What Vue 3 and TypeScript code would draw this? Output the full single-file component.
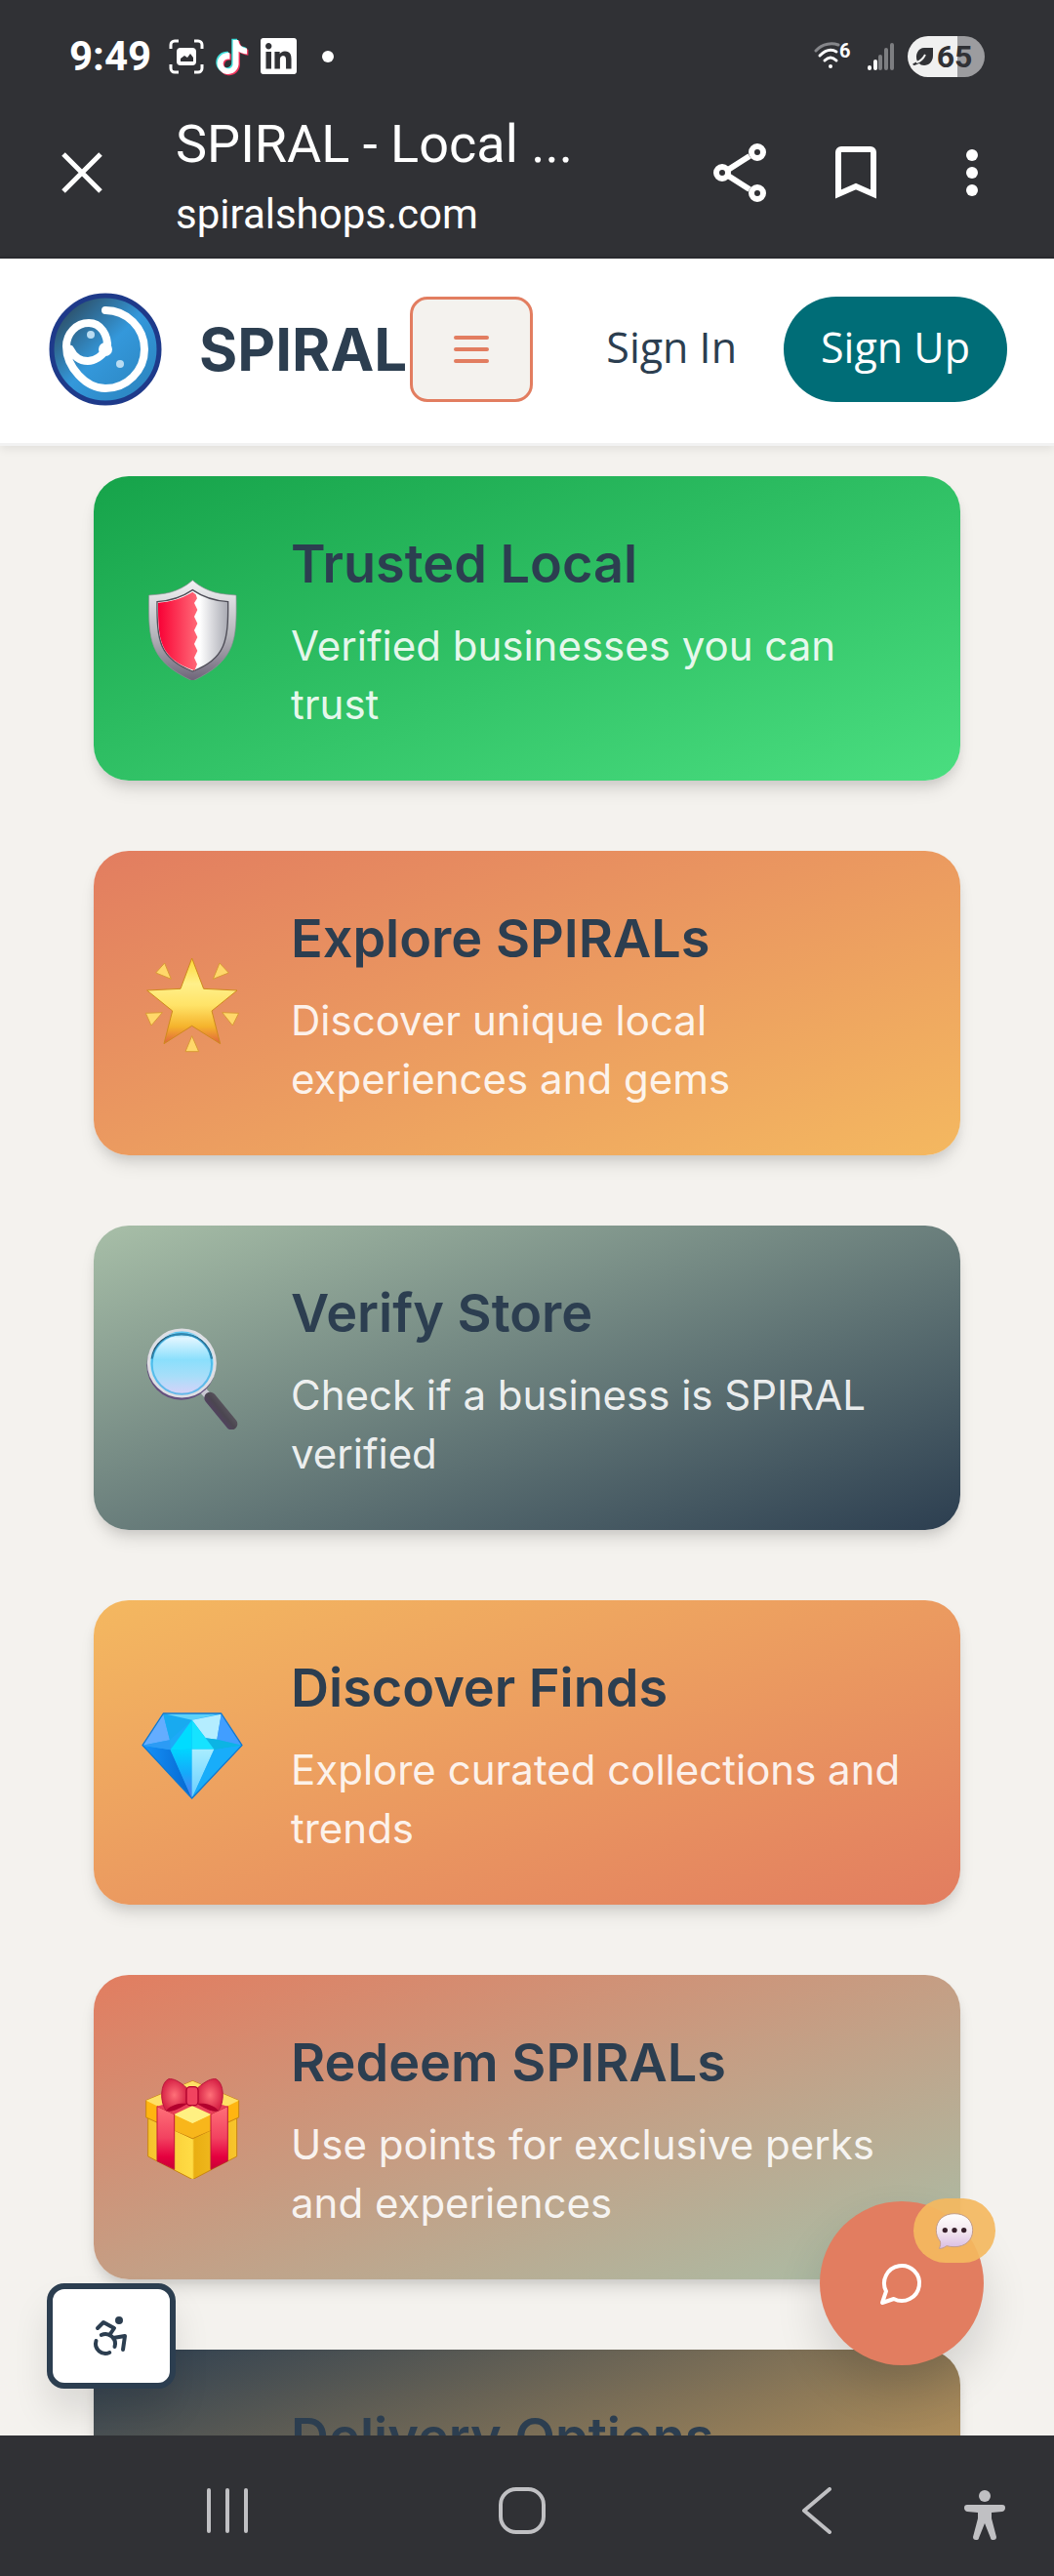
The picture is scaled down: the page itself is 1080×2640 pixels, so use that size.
<script setup lang="ts">
interface Feature {
  icon: 'shield' | 'star' | 'lens' | 'gem' | 'gift' | 'none'
  title: string
  text: string
  tone: string
}

const features: Feature[] = [
  { icon: 'shield', title: 'Trusted Local', text: 'Verified businesses you can trust', tone: 'green' },
  { icon: 'star', title: 'Explore SPIRALs', text: 'Discover unique local experiences and gems', tone: 'coral' },
  { icon: 'lens', title: 'Verify Store', text: 'Check if a business is SPIRAL verified', tone: 'sage' },
  { icon: 'gem', title: 'Discover Finds', text: 'Explore curated collections and trends', tone: 'gold' },
  { icon: 'gift', title: 'Redeem SPIRALs', text: 'Use points for exclusive perks and experiences', tone: 'blush' },
  { icon: 'none', title: 'Delivery Options', text: '', tone: 'navy' },
]

const tiktok =
  'M12.525.02c1.31-.02 2.61-.01 3.91-.02.08 1.53.63 3.09 1.75 4.17 1.12 1.11 2.7 1.62 4.24 1.79v4.03c-1.44-.05-2.89-.35-4.2-.97-.57-.26-1.1-.59-1.62-.93-.01 2.92.01 5.84-.02 8.75-.08 1.4-.54 2.79-1.35 3.94-1.31 1.92-3.58 3.17-5.91 3.21-1.43.08-2.86-.31-4.08-1.03-2.02-1.19-3.44-3.37-3.65-5.71-.02-.5-.03-1-.01-1.49.18-1.9 1.12-3.72 2.58-4.96 1.66-1.44 3.98-2.13 6.15-1.72.02 1.48-.04 2.96-.04 4.44-.99-.32-2.15-.23-3.02.37-.63.41-1.11 1.04-1.36 1.75-.21.51-.15 1.07-.14 1.61.24 1.64 1.82 3.02 3.5 2.87 1.12-.01 2.19-.66 2.77-1.61.19-.33.4-.67.41-1.06.1-1.79.06-3.57.07-5.36.01-4.03-.01-8.05.02-12.07z'
</script>

<template>
  <div class="screen">
    <div class="chrome">
      <div class="status">
        <span class="time">9:49</span>
        <svg class="capture" viewBox="0 0 36 36" width="36" height="36">
          <path d="M2 10V6a4 4 0 0 1 4-4h4M26 2h4a4 4 0 0 1 4 4v4M34 26v4a4 4 0 0 1-4 4h-4M10 34H6a4 4 0 0 1-4-4v-4" fill="none" stroke="#fff" stroke-width="3" />
          <rect x="8" y="9" width="20" height="18" rx="4" fill="#fff" />
          <path d="M12 23v-3l4-3 3 2 3-4 3 4v4z" fill="#303135" />
        </svg>
        <svg class="tiktok" viewBox="0 -1 26 27" width="38" height="40">
          <path :d="tiktok" fill="#3fdfdb" />
          <path :d="tiktok" fill="#f0355d" transform="translate(1.8 1.6)" />
          <path :d="tiktok" fill="#fff" transform="translate(.9 .8)" />
        </svg>
        <svg class="linkedin" viewBox="0 0 24 24" width="37" height="37">
          <path fill="#fff" d="M20.447 20.452h-3.554v-5.569c0-1.328-.027-3.037-1.852-3.037-1.853 0-2.136 1.445-2.136 2.939v5.667H9.351V9h3.414v1.561h.046c.477-.9 1.637-1.85 3.37-1.85 3.601 0 4.267 2.37 4.267 5.455v6.286zM5.337 7.433c-1.144 0-2.063-.926-2.063-2.065 0-1.138.92-2.063 2.063-2.063 1.14 0 2.064.925 2.064 2.063 0 1.139-.925 2.065-2.064 2.065zm1.782 13.019H3.555V9h3.564v11.452zM22.225 0H1.771C.792 0 0 .774 0 1.729v20.542C0 23.227.792 24 1.771 24h20.451C23.2 24 24 23.227 24 22.271V1.729C24 .774 23.2 0 22.222 0h.003z" />
        </svg>
        <span class="more-dot"></span>
        <div class="signals">
          <svg viewBox="0 -6 40 42" width="40" height="42">
            <g fill="none" stroke-linecap="round" stroke-width="3">
              <path d="M2 9C9 1 19 1 25 3" stroke="#85868a" />
              <path d="M6 14c6-6 12-7 17-4" stroke="#fff" />
              <path d="M11 19c4-4 8-4 12 0" stroke="#fff" />
            </g>
            <circle cx="17" cy="25" r="2" fill="#fff" />
            <text x="26" y="16" class="wifi-gen">6</text>
          </svg>
          <svg viewBox="0 0 28 30" width="28" height="30" fill="none" stroke-width="4" stroke-linecap="round">
            <path d="M3 26v1M9 20v7" stroke="#fff" />
            <path d="M14 15v12M20 8v19M26 3v24" stroke="#7d7e81" />
          </svg>
          <div class="battery">
            <svg viewBox="0 0 22 20" width="22" height="20">
              <path d="M21 1v8c0 6-4 10-9 10-3 0-4-1-5-2l-5 2c-2 0-2-2-1-2l4-2C2 8 6 1 12 1z" fill="#303135" />
              <path d="M4 16c4-1 7-4 9-8" fill="none" stroke="#f0f0f0" stroke-width="2" />
            </svg>
            <span>65</span>
          </div>
        </div>
      </div>
      <div class="toolbar">
        <button class="plain" aria-label="Close tab">
          <svg viewBox="0 0 44 44" width="44" height="44"><path d="M3 3l38 38M41 3L3 41" stroke="#fff" stroke-width="5" /></svg>
        </button>
        <div class="page-name">
          <div class="page-title">SPIRAL - Local ...</div>
          <div class="page-host">spiralshops.com</div>
        </div>
        <div class="tools">
          <button class="plain" aria-label="Share">
            <svg viewBox="0 0 56 62" width="56" height="62" fill="none" stroke="#fff" stroke-width="6">
              <path d="M16 28l22-14M16 34l22 14" />
              <circle cx="10" cy="31" r="6" /><circle cx="46" cy="10" r="6" /><circle cx="46" cy="52" r="6" />
            </svg>
          </button>
          <button class="plain" aria-label="Bookmark">
            <svg viewBox="0 0 42 54" width="42" height="54"><path d="M3 49V6a3 3 0 0 1 3-3h30a3 3 0 0 1 3 3v43l-18-8z" fill="none" stroke="#fff" stroke-width="6" /></svg>
          </button>
          <button class="plain" aria-label="More options">
            <svg viewBox="0 0 12 48" width="12" height="48" fill="#fff"><circle cx="6" cy="6" r="6" /><circle cx="6" cy="24" r="6" /><circle cx="6" cy="42" r="6" /></svg>
          </button>
        </div>
      </div>
    </div>

    <header class="site-header">
      <svg class="logo" viewBox="0 0 116 116" width="116" height="116">
        <defs>
          <linearGradient id="logoFill" x1="0" y1="0" x2="1" y2="1">
            <stop offset="0.1" stop-color="#2c4a60" /><stop offset="0.5" stop-color="#3498db" /><stop offset="1" stop-color="#2980b9" />
          </linearGradient>
        </defs>
        <circle cx="58" cy="58" r="55" fill="url(#logoFill)" stroke="#1e3a8a" stroke-width="5" />
        <path d="M58 18C80 18 98 36 98 58S80 98 58 98C38 98 18 76 18 55C18 42 28 31 41 31C53 31 61 43 60 57C55 64 48 70 40 70C31 70 25 64 22 58" fill="none" stroke="#fff" stroke-width="8" stroke-linecap="round" />
        <circle cx="58" cy="58" r="7" fill="#fff" />
        <circle cx="43" cy="43" r="4" fill="#b9dcf2" /><circle cx="73" cy="73" r="4" fill="#b9dcf2" />
      </svg>
      <span class="brand">SPIRAL</span>
      <button class="menu" aria-label="Menu">
        <svg viewBox="0 0 24 24" width="48" height="48" fill="none" stroke="#e27d60" stroke-width="2" stroke-linecap="round"><path d="M4 6h16M4 12h16M4 18h16" /></svg>
      </button>
      <nav class="auth">
        <a href="#" class="sign-in">Sign In</a>
        <button class="sign-up">Sign Up</button>
      </nav>
    </header>

    <div class="viewport">
      <main class="cards">
        <article v-for="f in features" :key="f.title" class="card" :class="f.tone">
          <svg v-if="f.icon === 'shield'" class="glyph" viewBox="192 363 318 318">
            <defs>
              <linearGradient id="rim" x1="0" y1="0" x2="0" y2="1"><stop offset="0" stop-color="#f2f2f4" /><stop offset=".55" stop-color="#b4b4ba" /><stop offset="1" stop-color="#6d6478" /></linearGradient>
              <linearGradient id="redHalf"><stop offset="0" stop-color="#f80036" /><stop offset=".3" stop-color="#fb2048" /><stop offset="1" stop-color="#ff6a78" /></linearGradient>
              <linearGradient id="whiteHalf"><stop offset=".6" stop-color="#fff" /><stop offset="1" stop-color="#a8a9b2" /></linearGradient>
            </defs>
            <path d="M352 374C398 414 440 416 486 420C488 560 486 620 352 684C218 620 216 560 218 420C264 416 306 414 352 374Z" fill="url(#rim)" stroke="#8f8f97" stroke-width="2" />
            <path d="M352 404C390 430 424 438 461 440C462 560 454 616 352 654C250 616 242 560 243 440C280 438 314 430 352 404Z" fill="url(#whiteHalf)" stroke="#4e4d57" stroke-width="4" />
            <path d="M352 410L362 418L366 430L357 444L367 465L357 486L367 507L357 528L367 549L357 570L367 591L357 612L366 632L358 652C250 612 246 560 246 443C282 440 316 432 352 410Z" fill="url(#redHalf)" />
          </svg>
          <svg v-else-if="f.icon === 'star'" class="glyph" viewBox="192 345 318 318">
            <defs>
              <linearGradient id="starFill" x1="0" y1="0" x2="0" y2="1"><stop offset="0" stop-color="#fdd835" /><stop offset=".3" stop-color="#fff08a" /><stop offset=".55" stop-color="#ffe368" /><stop offset=".8" stop-color="#f5b32c" /><stop offset="1" stop-color="#e0623c" /></linearGradient>
            </defs>
            <path d="M350 366L386 460L489 465L411 528L437 629L350 574L264 629L290 528L212 465L315 460Z" fill="url(#starFill)" stroke="#cf8a1c" stroke-width="3" stroke-linejoin="round" />
            <g fill="#ffd76a" stroke="#d99a35" stroke-width="3" stroke-linejoin="round">
              <path d="M266 381L286 430L239 411Z" /><path d="M435 381L463 411L415 430Z" /><path d="M208 535L259 533L225 573Z" /><path d="M443 533L494 535L475 573Z" /><path d="M350 605L371 653L330 653Z" />
            </g>
          </svg>
          <svg v-else-if="f.icon === 'lens'" class="glyph" viewBox="192 357 318 318">
            <defs>
              <linearGradient id="glass" x1="0" y1="0" x2="0" y2="1"><stop offset="0" stop-color="#29b6ef" /><stop offset=".12" stop-color="#e2f6ff" /><stop offset=".45" stop-color="#8adffc" /><stop offset=".7" stop-color="#a8def9" /><stop offset="1" stop-color="#dcd0f8" /></linearGradient>
              <linearGradient id="handle" x1="1" y1="0" x2="0" y2="1"><stop offset="0" stop-color="#6b6870" /><stop offset=".5" stop-color="#4b4650" /><stop offset="1" stop-color="#5b3a78" /></linearGradient>
            </defs>
            <path d="M378 548L408 582" stroke="#c9c9d2" stroke-width="22" />
            <path d="M406 578L472 658" stroke="url(#handle)" stroke-width="36" stroke-linecap="round" />
            <circle cx="317" cy="478" r="106" fill="#64507e" />
            <circle cx="319" cy="471" r="102" fill="url(#glass)" stroke="#dedee3" stroke-width="9" />
            <path d="M227 458C234 410 270 382 318 382S402 410 411 458" fill="none" stroke="#29485e" stroke-width="6" />
            <circle cx="319" cy="474" r="92" fill="none" stroke="#2baae2" stroke-opacity=".65" stroke-width="6" />
          </svg>
          <svg v-else-if="f.icon === 'gem'" class="glyph" viewBox="192 369 318 318">
            <defs>
              <linearGradient id="gemDeep" x1="0" y1="0" x2="0" y2="1"><stop offset="0" stop-color="#00d5ff" /><stop offset=".5" stop-color="#15a9fa" /><stop offset="1" stop-color="#5a76ef" /></linearGradient>
              <linearGradient id="gemSide"><stop offset="0" stop-color="#1593fa" /><stop offset="1" stop-color="#0667cf" /></linearGradient>
              <linearGradient id="gemPale" x1="0" y1="0" x2="0" y2="1"><stop offset="0" stop-color="#a8edff" /><stop offset="1" stop-color="#68ceff" /></linearGradient>
            </defs>
            <path d="M262 408L440 408L504 506L350 669L198 506Z" fill="#1eaaf7" />
            <path d="M262 410L198 506L282 490Z" fill="#64adff" /><path d="M262 410L350 428L282 490Z" fill="#18aaf0" />
            <path d="M262 408H440L350 428Z" fill="#5bd2fa" /><path d="M440 410L350 428L392 484L427 488Z" fill="#b4edff" />
            <path d="M440 410L504 506L427 488Z" fill="#419eff" /><path d="M427 488L504 506L418 520L392 484Z" fill="#0cb4e4" />
            <path d="M350 428L284 520L350 518Z" fill="#00dcff" /><path d="M350 428V518H418Z" fill="#16e3ff" />
            <path d="M198 506L284 520L350 669Z" fill="url(#gemSide)" /><path d="M284 520L350 518V669Z" fill="url(#gemDeep)" />
            <path d="M350 518H418L350 669Z" fill="url(#gemPale)" /><path d="M418 520L504 506L350 669Z" fill="#18adfa" />
            <path d="M198 506L282 490L284 520Z" fill="#2c9bf5" />
            <path d="M262 408L440 408L504 506L350 669L198 506Z" fill="none" stroke="#1278cf" stroke-width="4" stroke-linejoin="round" />
          </svg>
          <svg v-else-if="f.icon === 'gift'" class="glyph" viewBox="192 351 318 318">
            <defs>
              <linearGradient id="boxFront"><stop offset="0" stop-color="#f5c32c" /><stop offset=".5" stop-color="#ffdc45" /><stop offset=".52" stop-color="#e9ae12" /><stop offset="1" stop-color="#f8c52c" /></linearGradient>
              <linearGradient id="ribbon" x1="0" y1="0" x2="0" y2="1"><stop offset="0" stop-color="#ff7078" /><stop offset=".5" stop-color="#f24260" /><stop offset=".8" stop-color="#e5003f" /><stop offset="1" stop-color="#c80035" /></linearGradient>
              <radialGradient id="loop"><stop offset="0" stop-color="#ff7078" /><stop offset="1" stop-color="#d82447" /></radialGradient>
            </defs>
            <path d="M215 480L352 545L488 480V600L352 671L215 600Z" fill="url(#boxFront)" stroke="#c98512" stroke-width="3" />
            <path d="M209 428L352 368L494 428V480L352 545L209 480Z" fill="#ffb511" stroke="#c98512" stroke-width="3" />
            <path d="M209 428L352 368L494 428L352 498Z" fill="#ffe066" />
            <path d="M294 474L352 498L408 474V520L352 543L294 520Z" fill="#f8b61b" /><path d="M296 472L352 445L408 472L352 498Z" fill="#fff082" />
            <path d="M243 446L296 470V640L243 614ZM460 446L408 470V640L460 614Z" fill="url(#ribbon)" stroke="#bf1939" stroke-width="3" />
            <path d="M243 446L330 420L350 445L296 470ZM460 446L372 420L352 445L408 470Z" fill="#e93e58" />
            <path d="M335 390C310 368 292 360 278 362C252 374 251 434 271 460C292 464 312 446 335 438Z" fill="url(#loop)" stroke="#b81c3d" stroke-width="3" />
            <path d="M367 390C392 368 410 360 424 362C450 374 451 434 431 460C410 464 390 446 367 438Z" fill="url(#loop)" stroke="#b81c3d" stroke-width="3" />
            <path d="M271 458C290 440 312 436 335 438C312 452 292 466 271 458ZM431 458C412 440 390 436 367 438C390 452 410 466 431 458Z" fill="#b2002d" />
            <rect x="333" y="386" width="36" height="57" rx="12" fill="#f1435f" stroke="#b0002c" stroke-width="4" />
          </svg>
          <div v-else class="glyph"></div>
          <div class="copy">
            <h2>{{ f.title }}</h2>
            <p>{{ f.text }}</p>
          </div>
        </article>
      </main>

      <button class="a11y" aria-label="Accessibility">
        <svg viewBox="0 0 24 24" width="48" height="48" fill="none" stroke="#2c3e50" stroke-width="2" stroke-linecap="round" stroke-linejoin="round">
          <circle cx="16" cy="4" r="1" /><path d="m18 19 1-7-6 1" /><path d="m5 8 3-3 5.5 3-2.36 3.5" /><path d="M4.24 14.5a5 5 0 0 0 6.88 6" /><path d="M13.76 17.5a5 5 0 0 0-6.88-6" />
        </svg>
      </button>
      <button class="chat" aria-label="Open chat">
        <svg viewBox="0 0 24 24" width="48" height="48" fill="none" stroke="#fff" stroke-width="2" stroke-linecap="round" stroke-linejoin="round"><path d="M7.9 20A9 9 0 1 0 4 16.1L2 22Z" /></svg>
        <span class="badge">
          <svg viewBox="534 142 120 117" width="40" height="39">
            <defs><linearGradient id="bubble" x1="0" y1="0" x2="0" y2="1"><stop offset="0" stop-color="#fffefd" /><stop offset=".5" stop-color="#f3e7ef" /><stop offset="1" stop-color="#d9bce4" /></linearGradient></defs>
            <path d="M594 147C628 147 650 168 650 198S628 249 594 249C585 249 577 248 570 246C562 252 554 255 547 254C551 246 552 238 550 232C542 222 538 211 538 198C538 168 560 147 594 147Z" fill="url(#bubble)" stroke="#c39e8b" stroke-width="3" />
            <circle cx="565" cy="198" r="8" fill="#38202c" /><circle cx="594" cy="198" r="8" fill="#38202c" /><circle cx="623" cy="198" r="8" fill="#38202c" />
          </svg>
        </span>
      </button>
    </div>

    <nav class="system-nav">
      <button class="plain key" aria-label="Recent apps">
        <svg viewBox="0 0 44 48" width="44" height="48" stroke="#c0c0c3" stroke-width="4" stroke-linecap="round"><path d="M3 3v42M22 3v42M41 3v42" /></svg>
      </button>
      <button class="plain key" aria-label="Home">
        <svg viewBox="0 0 48 48" width="48" height="48"><rect x="2" y="2" width="44" height="44" rx="16" fill="none" stroke="#c0c0c3" stroke-width="4" /></svg>
      </button>
      <button class="plain key" aria-label="Back">
        <svg viewBox="0 0 32 48" width="32" height="48" fill="none" stroke="#c0c0c3" stroke-width="4" stroke-linecap="round" stroke-linejoin="round"><path d="M29 2L3 24l26 22" /></svg>
      </button>
      <button class="plain person" aria-label="Accessibility shortcut">
        <svg viewBox="0 0 42 52" width="42" height="52" fill="#c0c0c3">
          <circle cx="21" cy="7" r="6" />
          <path d="M3 16h36q3 0 3 3t-3 4l-11 1v6l5 19q0 3-3 3t-3-2l-6-15-6 15q0 2-3 2t-3-3l5-19v-6L3 23q-3-1-3-4t3-3z" />
        </svg>
      </button>
    </nav>
  </div>
</template>

<style>
body {
  margin: 0;
}
</style>

<style scoped>
.screen {
  display: flex;
  flex-direction: column;
  height: 100vh;
  background: #f4f2ee;
  font-family: Inter, "Liberation Sans", sans-serif;
  overflow: hidden;
}
* {
  box-sizing: border-box;
}
svg {
  display: block;
  flex: none;
}
button {
  border: 0;
  padding: 0;
  font: inherit;
  cursor: pointer;
}
.plain {
  background: none;
  display: flex;
  align-items: center;
  justify-content: center;
}
.chrome {
  flex: none;
  background: #303135;
  color: #fff;
  font-family: Roboto, sans-serif;
}
.status {
  display: flex;
  align-items: center;
  height: 91px;
  padding: 24px 71px 0;
}
.time {
  font-size: 42px;
  font-weight: 700;
  line-height: 48px;
  min-width: 86px;
}
.capture {
  margin-left: 16px;
}
.tiktok {
  margin-left: 10px;
}
.linkedin {
  margin-left: 10px;
}
.more-dot {
  width: 12px;
  height: 12px;
  border-radius: 50%;
  background: #fff;
  margin-left: 26px;
}
.signals {
  display: flex;
  align-items: center;
  gap: 14px;
  margin-left: auto;
}
.wifi-gen {
  font-family: Roboto, sans-serif;
  font-size: 20px;
  font-weight: 700;
  fill: #fff;
}
.battery {
  display: flex;
  align-items: center;
  justify-content: center;
  gap: 3px;
  width: 79px;
  height: 42px;
  border-radius: 21px;
  background: linear-gradient(90deg, #f0f0f0 65%, #9c9c9f 65%);
  color: #303135;
  font-size: 32px;
  font-weight: 700;
  line-height: 42px;
  padding-right: 8px;
}
.toolbar {
  display: flex;
  align-items: center;
  height: 174px;
  padding: 0 78px 0 62px;
  border-bottom: 2px solid #2a2b2f;
}
.page-name {
  flex: 1;
  min-width: 0;
  margin-left: 74px;
  padding-top: 8px;
  display: flex;
  flex-direction: column;
  gap: 14px;
}
.page-title {
  font-size: 54px;
  line-height: 64px;
  white-space: nowrap;
}
.page-host {
  font-size: 42px;
  line-height: 52px;
}
.tools {
  display: flex;
  align-items: center;
  gap: 70px;
}
.tools button:last-child {
  margin-left: 22px;
}
.site-header {
  position: relative;
  flex: none;
  display: flex;
  align-items: center;
  height: 192px;
  padding: 0 48px 3px 50px;
  background: #fff;
  border-bottom: 3px solid #f2f2f2;
  box-shadow: 0 3px 9px rgba(0, 0, 0, 0.08);
}
.brand {
  margin-left: 38px;
  font-size: 60px;
  font-weight: 700;
  line-height: 84px;
  color: #2c3e50;
}
.menu {
  display: flex;
  align-items: center;
  justify-content: center;
  width: 126px;
  height: 108px;
  margin-left: 3px;
  border: 3px solid #e27d60;
  border-radius: 18px;
  background: #f4f2ee;
}
.auth {
  display: flex;
  align-items: center;
  gap: 48px;
  margin-left: auto;
  font-family: "Open Sans", sans-serif;
  font-size: 43px;
  font-weight: 500;
}
.sign-in {
  padding-bottom: 6px;
  color: #2c3e50;
  text-decoration: none;
}
.sign-up {
  min-width: 229px;
  height: 108px;
  padding: 0 36px 6px;
  border-radius: 54px;
  background: #006d77;
  color: #fff;
}
.viewport {
  position: relative;
  flex: 1;
  min-height: 0;
  display: flex;
  flex-direction: column;
}
.cards {
  flex: 1;
  min-height: 0;
  overflow: hidden;
  padding: 31px 96px 0;
  display: flex;
  flex-direction: column;
  gap: 72px;
}
.card {
  flex: none;
  display: flex;
  align-items: center;
  gap: 48px;
  min-height: 312px;
  padding: 48px;
  border-radius: 36px;
  box-shadow: 0 12px 18px -3px rgba(0, 0, 0, 0.1), 0 6px 12px -3px rgba(0, 0, 0, 0.1);
}
.green { background: linear-gradient(to bottom right, #16a34a, #4ade80); }
.coral { background: linear-gradient(to bottom right, #e27d60, #f4b860); }
.sage { background: linear-gradient(to bottom right, #a8bfa8, #2c3e50); }
.gold { background: linear-gradient(to bottom right, #f4b860, #e27d60); }
.blush { background: linear-gradient(to bottom right, #e27d60, #a8bfa8); }
.navy { background: linear-gradient(to bottom right, #2c3e50, #f4b860); }
.glyph {
  flex: none;
  width: 106px;
  height: 106px;
}
.copy {
  flex: 1;
  min-width: 0;
}
h2 {
  margin: 0 0 12px;
  font-size: 54px;
  line-height: 84px;
  font-weight: 600;
  color: #2c3e50;
}
p {
  margin: 0;
  min-height: 120px;
  font-size: 42px;
  line-height: 60px;
  color: rgba(255, 255, 255, 0.9);
}
.a11y {
  position: absolute;
  left: 48px;
  bottom: 48px;
  display: flex;
  align-items: center;
  justify-content: center;
  width: 132px;
  height: 108px;
  border: 6px solid #2c3e50;
  border-radius: 18px;
  background: #fff;
  box-shadow: 0 24px 36px rgba(0, 0, 0, 0.1);
}
.chat {
  position: absolute;
  right: 72px;
  bottom: 72px;
  display: flex;
  align-items: center;
  justify-content: center;
  width: 168px;
  height: 168px;
  border-radius: 50%;
  background: #e27d60;
  box-shadow: 0 24px 48px rgba(0, 0, 0, 0.14);
}
.badge {
  position: absolute;
  top: -3px;
  right: -12px;
  display: flex;
  align-items: center;
  justify-content: center;
  width: 84px;
  height: 66px;
  border-radius: 33px;
  background: rgba(244, 184, 96, 0.92);
}
.system-nav {
  position: relative;
  flex: none;
  display: flex;
  align-items: center;
  height: 144px;
  padding: 10px 50px 0 82px;
  background: #303135;
}
.key {
  flex: 1;
}
.person {
  width: 42px;
  margin-top: 8px;
}
</style>
